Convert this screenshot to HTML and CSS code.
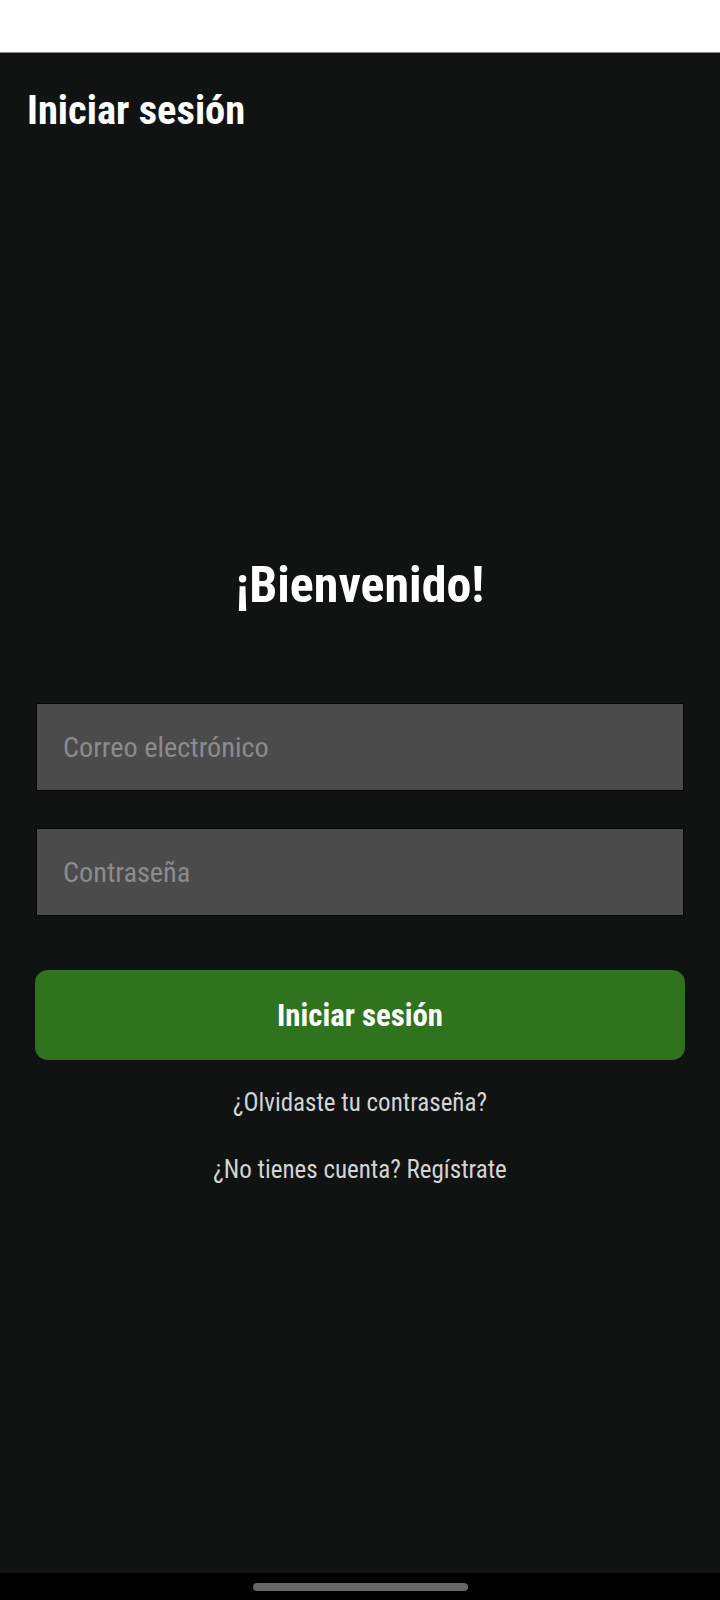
FILE: index.html
```html
<!DOCTYPE html>
<html lang="es">
<head>
<meta charset="utf-8">
<title>Iniciar sesión</title>
<link rel="stylesheet" href="styles.css">
</head>
<body>
<div class="screen">
  <div class="status-bar"></div>
  <header class="app-bar">
    <h1 class="app-title">Iniciar sesión</h1>
  </header>
  <main class="content">
    <h2 class="welcome">¡Bienvenido!</h2>
    <form class="login-form">
      <input class="field" type="email" placeholder="Correo electrónico">
      <input class="field field-password" type="password" placeholder="Contraseña">
      <button class="primary-btn" type="button">Iniciar sesión</button>
    </form>
    <a class="link link-forgot" href="#">¿Olvidaste tu contraseña?</a>
    <a class="link link-register" href="#">¿No tienes cuenta? Regístrate</a>
  </main>
  <div class="nav-bar"><span class="nav-pill"></span></div>
</div>
</body>
</html>
```
FILE: styles.css
```css
* { box-sizing: border-box; }
html, body {
  margin: 0;
  padding: 0;
  background: #111313;
}
body {
  font-family: Roboto, "Noto Sans", sans-serif;
  font-stretch: condensed;
  color: #ffffff;
}
.screen {
  width: 720px;
  height: 1600px;
  display: flex;
  flex-direction: column;
  background: #111313;
}
.status-bar {
  height: 53px;
  flex: none;
  background: #ffffff;
  border-bottom: 1px solid #8e8e8e;
}
.app-bar {
  flex: none;
  padding: 33px 0 0 27px;
}
.app-title {
  margin: 0;
  font-size: 40.5px;
  line-height: 48px;
  font-weight: 700;
  font-stretch: condensed;
  color: #ffffff;
}
.content {
  flex: 1;
  display: flex;
  flex-direction: column;
  align-items: center;
  padding: 421px 35px 0;
}
.welcome {
  margin: 0;
  font-size: 50px;
  line-height: 60px;
  font-weight: 700;
  font-stretch: condensed;
  color: #ffffff;
  text-align: center;
}
.login-form {
  align-self: stretch;
  display: flex;
  flex-direction: column;
  margin-top: 88px;
}
.field {
  height: 88px;
  margin: 0 1px;
  padding: 0 26px;
  background: #4b4b4b;
  border: 1px solid #050505;
  border-radius: 1px;
  font-family: Roboto, "Noto Sans", sans-serif;
  font-stretch: condensed;
  font-size: 28.3px;
  color: #e6e6e6;
  outline: none;
}
.field::placeholder {
  color: #8b8b8b;
  opacity: 1;
}
.field-password {
  margin-top: 37px;
}
.primary-btn {
  margin-top: 54px;
  height: 90px;
  border: none;
  border-radius: 13px;
  background: #2f731e;
  color: #ffffff;
  font-family: Roboto, "Noto Sans", sans-serif;
  font-stretch: condensed;
  font-size: 30.8px;
  font-weight: 700;
  cursor: pointer;
}
.link {
  font-size: 25px;
  line-height: 32px;
  color: #d4d4d4;
  text-decoration: none;
  text-align: center;
}
.link-forgot {
  margin-top: 27px;
}
.link-register {
  margin-top: 35px;
}
.nav-bar {
  flex: none;
  height: 27px;
  background: #000000;
  display: flex;
  justify-content: center;
  padding-top: 10px;
}
.nav-pill {
  width: 215px;
  height: 8px;
  border-radius: 4px;
  background: #666666;
}
```
